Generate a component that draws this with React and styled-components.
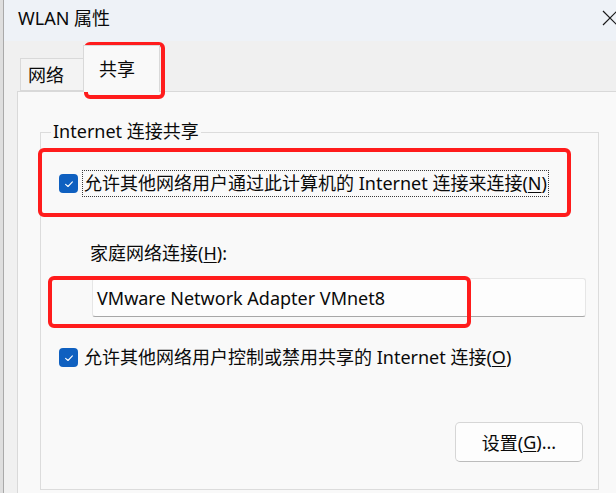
import React from 'react';
import styled, { createGlobalStyle } from 'styled-components';

const Global = createGlobalStyle`
  html, body { margin: 0; padding: 0; }
  body {
    width: 616px;
    height: 493px;
    overflow: hidden;
    background: #f0f0f0;
    font-family: "Noto Sans", "Noto Sans CJK SC", sans-serif;
    color: #0a0a0a;
  }
`;

const Root = styled.div`
  position: relative;
  display: flex;
  width: 616px;
  height: 493px;
  overflow: hidden;
`;

const LeftEdge = styled.div`
  flex: 0 0 4px;
  box-sizing: border-box;
  background: #dedede;
  border-right: 1px solid #a9a9a9;
`;

const Window = styled.div`
  flex: 1;
  min-width: 0;
  display: flex;
  flex-direction: column;
`;

const TitleBar = styled.div`
  flex: 0 0 41px;
  display: flex;
  align-items: flex-start;
  justify-content: space-between;
  padding-left: 14px;
  background: #eef2f7;
`;

const Title = styled.div`
  font-size: 18px;
  line-height: 24px;
  margin-top: 6px;
`;

const CloseIcon = styled.svg`
  width: 16px;
  height: 16px;
  margin-top: 10px;
  margin-right: -2px;
`;

const Body = styled.div`
  flex: 1;
  display: flex;
  flex-direction: column;
  background: #f0f0f0;
  padding-left: 13px;
`;

const TabRow = styled.div`
  flex: 0 0 50px;
  display: flex;
  align-items: flex-end;
  padding-left: 3px;
  position: relative;
  z-index: 1;
`;

const Tab = styled.div`
  box-sizing: border-box;
  display: flex;
  align-items: ${p => (p.$active ? 'flex-start' : 'center')};
  height: ${p => (p.$active ? '47px' : '33px')};
  width: ${p => (p.$active ? '77px' : '63px')};
  padding-left: ${p => (p.$active ? '15px' : '7px')};
  padding-top: ${p => (p.$active ? '11px' : '0')};
  margin-bottom: ${p => (p.$active ? '-1px' : '0')};
  background: ${p => (p.$active ? '#f9f9f9' : '#f3f3f3')};
  border: 1px solid #d9d9d9;
  border-bottom: ${p => (p.$active ? 'none' : '1px solid #d9d9d9')};
  border-right: ${p => (p.$active ? '1px solid #d9d9d9' : 'none')};
  font-size: 18px;
  line-height: 24px;
`;

const Panel = styled.div`
  flex: 1;
  background: #f9f9f9;
  border-top: 1px solid #d9d9d9;
  border-left: 1px solid #d9d9d9;
`;

const GroupBox = styled.div`
  position: relative;
  box-sizing: border-box;
  width: 559px;
  height: 358px;
  margin: 40px 0 0 22px;
  border: 1px solid #dcdcdc;
  display: flex;
  flex-direction: column;
  font-size: 18px;
`;

const Legend = styled.span`
  position: absolute;
  top: -14px;
  left: 10px;
  padding: 0 2px;
  background: #f9f9f9;
  line-height: 24px;
`;

const CheckRow = styled.div`
  display: flex;
  align-items: center;
  gap: 4px;
  padding-left: 18px;
  margin-top: ${p => p.$top}px;
`;

const CheckBox = styled.span`
  flex: 0 0 19px;
  width: 19px;
  height: 19px;
  border-radius: 4px;
  background: #0f60c0;
  display: flex;
  align-items: center;
  justify-content: center;
`;

const CheckLabel = styled.span`
  line-height: 25px;
  padding: 0 1px;
  border: 1px ${p => (p.$focus ? 'dotted #3a3a3a' : 'solid transparent')};
  white-space: nowrap;
`;

const Key = styled.span`
  text-decoration: underline;
  text-underline-offset: 2px;
  text-decoration-thickness: 1px;
`;

const FieldLabel = styled.div`
  margin: 44px 0 0 49px;
  line-height: 24px;
`;

const TextBox = styled.div`
  box-sizing: border-box;
  width: 494px;
  height: 39px;
  margin: 13px 0 0 51px;
  padding-left: 4px;
  display: flex;
  align-items: center;
  background: #fdfdfd;
  border: 1px solid #e6e6e6;
  border-bottom-color: #a8a8a8;
  border-radius: 3px;
`;

const Button = styled.div`
  align-self: flex-end;
  box-sizing: border-box;
  width: 128px;
  height: 40px;
  margin: 51px 15px 0 0;
  display: flex;
  align-items: center;
  justify-content: center;
  background: #fdfdfd;
  border: 1px solid #d6d6d6;
  border-bottom-color: #bcbcbc;
  border-radius: 5px;
`;

const Annotation = styled.div`
  position: absolute;
  box-sizing: border-box;
  border: 4px solid #ff1c1c;
  border-radius: 6px;
  pointer-events: none;
`;

const Check = () => (
  <svg width="12" height="12" viewBox="0 0 12 12">
    <path d="M2.6 6.3 L5 8.5 L9.4 3.8" fill="none" stroke="#ffffff" strokeWidth="1.1" strokeLinecap="round" strokeLinejoin="round" />
  </svg>
);

export default function App() {
  return (
    <>
      <Global />
      <Root>
        <LeftEdge />
        <Window>
          <TitleBar>
            <Title>WLAN 属性</Title>
            <CloseIcon viewBox="0 0 16 16">
              <path d="M1 1 L15 15 M15 1 L1 15" stroke="#1a1a1a" strokeWidth="1.2" fill="none" />
            </CloseIcon>
          </TitleBar>
          <Body>
            <TabRow>
              <Tab>网络</Tab>
              <Tab $active>共享</Tab>
            </TabRow>
            <Panel>
              <GroupBox>
                <Legend>Internet 连接共享</Legend>
                <CheckRow $top={37}>
                  <CheckBox><Check /></CheckBox>
                  <CheckLabel $focus>
                    允许其他网络用户通过此计算机的 Internet 连接来连接(<Key>N</Key>)
                  </CheckLabel>
                </CheckRow>
                <FieldLabel>家庭网络连接(<Key>H</Key>):</FieldLabel>
                <TextBox>VMware Network Adapter VMnet8</TextBox>
                <CheckRow $top={27}>
                  <CheckBox><Check /></CheckBox>
                  <CheckLabel>
                    允许其他网络用户控制或禁用共享的 Internet 连接(<Key>O</Key>)
                  </CheckLabel>
                </CheckRow>
                <Button>设置(<Key>G</Key>)...</Button>
              </GroupBox>
            </Panel>
          </Body>
        </Window>
        <Annotation style={{ left: 84, top: 42, width: 81, height: 57 }} />
        <Annotation style={{ left: 38, top: 148, width: 533, height: 69 }} />
        <Annotation style={{ left: 48, top: 276, width: 423, height: 52 }} />
      </Root>
    </>
  );
}
